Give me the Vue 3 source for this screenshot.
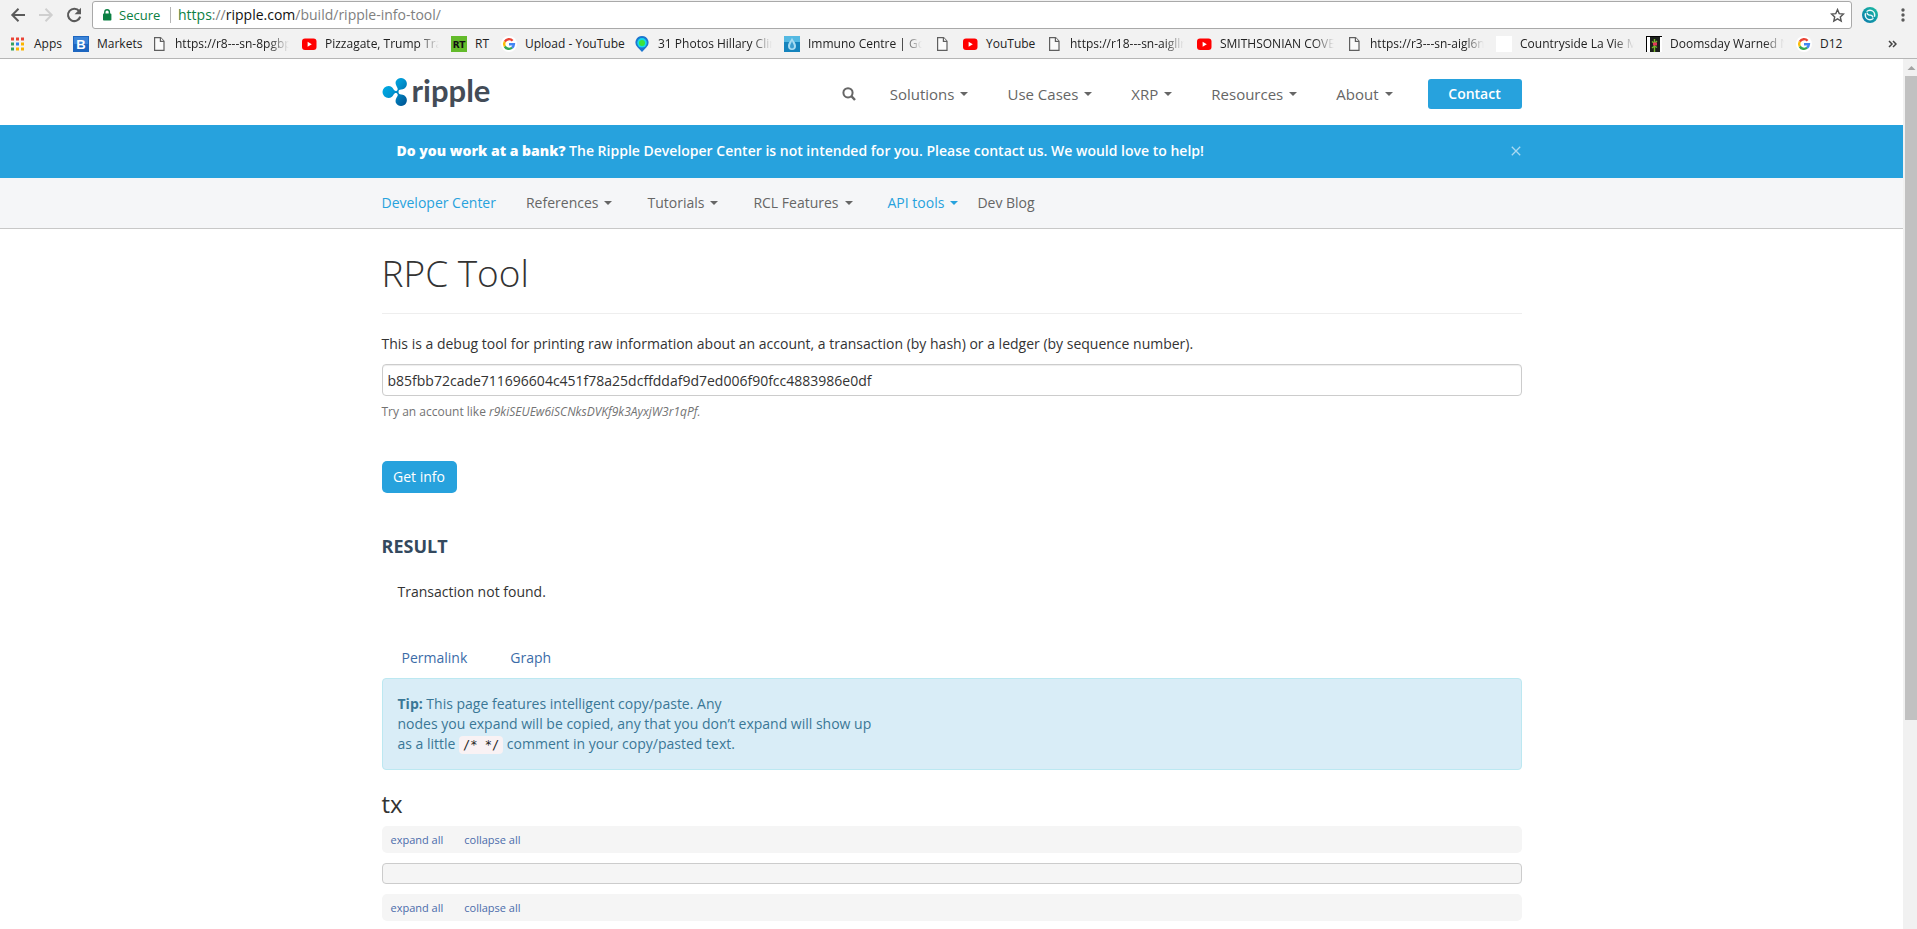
<script setup>
import { ref } from 'vue'

const query = ref('b85fbb72cade711696604c451f78a25dcffddaf9d7ed006f90fcc4883986e0df')
const bannerOpen = ref(true)

const bookmarks = [
  { icon: 'apps', label: 'Apps', width: 27 },
  { icon: 'bold', label: 'Markets', width: 42 },
  { icon: 'page', label: 'https://r8---sn-8pgbp', width: 114 },
  { icon: 'youtube', label: 'Pizzagate, Trump Tra', width: 114 },
  { icon: 'rt', label: 'RT', width: 14 },
  { icon: 'google', label: 'Upload - YouTube', width: 97 },
  { icon: 'pin', label: '31 Photos Hillary Clin', width: 114 },
  { icon: 'drop', label: 'Immuno Centre | GcM', width: 114 },
  { icon: 'page', label: '', width: 0 },
  { icon: 'youtube', label: 'YouTube', width: 48 },
  { icon: 'page', label: 'https://r18---sn-aigllr', width: 114 },
  { icon: 'youtube', label: 'SMITHSONIAN COVE', width: 114 },
  { icon: 'page', label: 'https://r3---sn-aigl6n', width: 114 },
  { icon: 'blank', label: 'Countryside La Vie M', width: 114 },
  { icon: 'flower', label: 'Doomsday Warned N', width: 114 },
  { icon: 'google', label: 'D12', width: 22 },
]

const mainNav = ['Solutions', 'Use Cases', 'XRP', 'Resources', 'About']
const subNav = ['References', 'Tutorials', 'RCL Features', 'API tools']
</script>

<template>
  <div class="browser">
    <div class="chrome">
      <div class="toolbar">
        <button class="tool" aria-label="Back">
          <svg width="16" height="16" viewBox="0 0 16 16" fill="none" stroke="#5a5a5a" stroke-width="2"><path d="M15 8H2.5M8.5 1.8 2.3 8l6.2 6.2" /></svg>
        </button>
        <button class="tool" aria-label="Forward">
          <svg width="16" height="16" viewBox="0 0 16 16" fill="none" stroke="#cfcfcf" stroke-width="2"><path d="M1 8h12.5M7.5 1.8 13.7 8l-6.2 6.2" /></svg>
        </button>
        <button class="tool" aria-label="Reload">
          <svg width="16" height="16" viewBox="0 0 16 16"><path d="M13.2 4.2A6.2 6.2 0 1 0 14.2 9.6" fill="none" stroke="#5a5a5a" stroke-width="2.1" /><path d="M15 .8v6.4H8.6z" fill="#5a5a5a" /></svg>
        </button>
        <div class="omnibox">
          <svg width="10" height="12" viewBox="0 0 10 12"><rect x="1" y="4.6" width="8.4" height="7" rx=".8" fill="#0b8043" /><path d="M2.8 5V3a2.3 2.3 0 0 1 4.6 0v2" fill="none" stroke="#0b8043" stroke-width="1.4" /></svg>
          <span class="secure">Secure</span>
          <span class="divider"></span>
          <div class="url" role="textbox" aria-label="Address" contenteditable="true" spellcheck="false"><span class="scheme">https</span>://<span class="host">ripple.com</span>/build/ripple-info-tool/</div>
          <button class="star" aria-label="Bookmark this page">
            <svg width="15" height="15" viewBox="0 0 15 15"><path d="M7.5 1.6l1.7 4 4.3.4-3.2 2.9.9 4.2-3.7-2.2-3.7 2.2.9-4.2L1.5 6l4.3-.4z" fill="none" stroke="#555" stroke-width="1.4" /></svg>
          </button>
        </div>
        <button class="ext" aria-label="Extension">
          <svg width="16" height="16" viewBox="0 0 16 16"><defs><linearGradient id="ext" x1="0" y1="1" x2="1" y2="0"><stop offset="0" stop-color="#0a78ad" /><stop offset="1" stop-color="#1cbf9f" /></linearGradient></defs><circle cx="8" cy="8" r="8" fill="url(#ext)" /><circle cx="8" cy="8" r="4.700" fill="none" stroke="#eefafa" stroke-width="1.500" /><path d="M2.600 4.200l3.200 2.600c1.500 1.400 3 1 4.400 2.400l3.200 2.600" fill="none" stroke="#0f93a8" stroke-width="1.800" /><path d="M5 5.600c.6 2.400 2 2.600 3 2.500s2.400.1 3 2.400" fill="none" stroke="#eefafa" stroke-width="1.400" /></svg>
        </button>
        <button class="ext more" aria-label="Menu">
          <svg width="4" height="14" viewBox="0 0 4 14" fill="#5a5a5a"><circle cx="2" cy="2" r="1.700" /><circle cx="2" cy="7" r="1.700" /><circle cx="2" cy="12" r="1.700" /></svg>
        </button>
      </div>
      <nav class="bookmarks" aria-label="Bookmarks">
        <a v-for="(b, i) in bookmarks" :key="i" href="#" class="bookmark" :aria-label="b.label || 'Untitled'">
          <svg width="16" height="16" viewBox="0 0 16 16">
            <g v-if="b.icon === 'apps'">
              <path d="M1 1.500h3v3H1zM6 1.500h3v3H6zM11 1.500h3v3h-3z" fill="#ea4335" />
              <path d="M1 6.500h3v3H1zM1 11.500h3v3H1z" fill="#34a060" />
              <path d="M6 6.500h3v3H6z" fill="#2f80ed" />
              <path d="M11 6.500h3v3h-3zM6 11.500h3v3H6zM11 11.500h3v3h-3z" fill="#fbb400" />
            </g>
            <g v-else-if="b.icon === 'bold'">
              <rect width="16" height="16" fill="#1d66c0" />
              <rect x="1" y="1" width="14" height="7" fill="#3b84d8" />
              <text x="8" y="13" text-anchor="middle" class="mark-b">B</text>
            </g>
            <g v-else-if="b.icon === 'page'" fill="#fbfbfb" stroke="#5f5f5f" stroke-width="1.200">
              <path d="M3.600 1.600h6l3.400 3.600v9.200H3.600z" /><path d="M9.400 1.600v3.800H13" />
            </g>
            <g v-else-if="b.icon === 'youtube'">
              <rect x="1" y="2.500" width="14.500" height="11.500" rx="3" fill="#f00" /><path d="M6.600 5.800v5L10.800 8.300z" fill="#fff" />
            </g>
            <g v-else-if="b.icon === 'rt'">
              <rect width="16" height="16" fill="#63bb2b" /><text x="8" y="12" text-anchor="middle" class="mark-rt">RT</text>
            </g>
            <g v-else-if="b.icon === 'google'" fill="none" stroke-width="2.400">
              <circle cx="8" cy="8" r="8" fill="#fff" />
              <path d="M3.800 5.600A4.900 4.900 0 0 1 11.600 4.700" stroke="#ea4335" />
              <path d="M3.800 5.600a4.900 4.900 0 0 0 0 4.900" stroke="#fbbc05" />
              <path d="M3.800 10.500a4.900 4.900 0 0 0 7.300 1.200" stroke="#34a853" />
              <path d="M11.100 11.700A4.900 4.900 0 0 0 12.900 8.200H8" stroke="#4285f4" />
            </g>
            <g v-else-if="b.icon === 'pin'">
              <path d="M8 0a6.500 6.500 0 0 1 4.500 11.200L8 16l-4.500-4.800A6.500 6.500 0 0 1 8 0z" fill="#1b75d0" />
              <circle cx="8" cy="6.800" r="4.800" fill="#16d9e8" /><circle cx="8" cy="7" r="3" fill="#3be23a" />
            </g>
            <g v-else-if="b.icon === 'drop'">
              <rect width="16" height="16" fill="#1584bd" /><rect width="16" height="6" fill="#54b9e2" />
              <path d="M8 1.500c1 3.200 4 5 4 8.500a4 4 0 0 1-8 0c0-3.500 3-5.300 4-8.500z" fill="#a9dcf2" /><path d="M8 5c.5 2 2 3.500 2 5.500a2 2 0 0 1-4 0C6 8.500 7.500 7 8 5z" fill="#3d9fd0" />
            </g>
            <rect v-else-if="b.icon === 'blank'" width="16" height="16" fill="#fff" />
            <g v-else>
              <rect width="16" height="16" fill="#fff" /><path d="M0 0h16v1H1v15H0z" fill="#000" /><rect x="4" y="1" width="10" height="15" fill="#1c1f1c" />
              <path d="M8.500 3v13M6 5.500l2.500 2L11 5M6 12l2.500-2 2.500 1.500" fill="none" stroke="#76b82a" stroke-width="1.400" /><path d="M7 6.500h4v3H7z" fill="#e2355a" />
            </g>
          </svg>
          <span v-if="b.label" class="bookmark-label" :class="{ fade: b.width === 114 }" :style="{ width: b.width + 'px' }">{{ b.label }}</span>
        </a>
        <button class="overflow" aria-label="More bookmarks">
          <svg width="9" height="8" viewBox="0 0 9 8" fill="none" stroke="#444" stroke-width="1.500"><path d="M1 1l3 3-3 3M5 1l3 3-3 3" /></svg>
        </button>
      </nav>
    </div>

    <div class="viewport">
      <div class="page">
        <header class="site-header">
          <div class="container header-row">
            <a href="#" class="logo" aria-label="Ripple">
              <svg width="26" height="28" viewBox="0 0 26 28">
                <defs><linearGradient id="mark" x1="0" y1="0" x2="1" y2="1"><stop offset="0" stop-color="#00b5ec" /><stop offset=".45" stop-color="#0097d3" /><stop offset="1" stop-color="#00508f" /></linearGradient></defs>
                <path fill="url(#mark)" d="M6.500 8c2.600 0 4.100 1.600 5 3.300 1 1.700 2.200 1.900 3.300 1.400 1-.6 1.300-1.800.4-3.300C13.500 6.500 13.200 4.600 14 3a5.800 5.800 0 1 1 5.200 8.600c-1.900 0-2.700.8-2.700 2.400s.8 2.400 2.700 2.400A5.800 5.800 0 1 1 14 25c-.8-1.600-.5-3.500 1.200-6.400.9-1.500.6-2.700-.4-3.300-1.100-.5-2.300-.3-3.300 1.400-.9 1.700-2.400 3.300-5 3.300a6 6 0 1 1 0-12z" />
              </svg>
              <span class="wordmark">ripple</span>
            </a>
            <nav class="main-nav" aria-label="Main">
              <button class="search" aria-label="Search">
                <svg width="14" height="14" viewBox="0 0 14 14" fill="none" stroke="#666"><circle cx="6" cy="5.800" r="4.600" stroke-width="2" /><path d="M9.400 9.200l3.600 3.800" stroke-width="2.400" /></svg>
              </button>
              <button v-for="item in mainNav" :key="item" class="drop">{{ item }}<i class="caret"></i></button>
            </nav>
            <a href="#" class="contact">Contact</a>
          </div>
        </header>

        <div v-if="bannerOpen" class="banner">
          <div class="container banner-row">
            <p><b>Do you work at a bank?</b> The Ripple Developer Center is not intended for you. Please contact us. We would love to help!</p>
            <button class="close" aria-label="Close" @click="bannerOpen = false">
              <svg width="10" height="10" viewBox="0 0 10 10" fill="none" stroke="#a9d9f1" stroke-width="1.300"><path d="M.8.8l8.400 8.400M9.200.8.8 9.200" /></svg>
            </button>
          </div>
        </div>

        <nav class="sub-nav" aria-label="Developer Center">
          <div class="container sub-row">
            <a href="#" class="active home">Developer Center</a>
            <button v-for="item in subNav" :key="item" class="drop" :class="{ active: item === 'API tools' }">{{ item }}<i class="caret"></i></button>
            <a href="#" class="blog">Dev Blog</a>
          </div>
        </nav>

        <main class="container">
          <h1>RPC Tool</h1>
          <form @submit.prevent>
            <label for="target">This is a debug tool for printing raw information about an account, a transaction (by hash) or a ledger (by sequence number).</label>
            <input id="target" v-model="query" type="text" spellcheck="false" />
            <p class="help">Try an account like <em>r9kiSEUEw6iSCNksDVKf9k3AyxjW3r1qPf.</em></p>
            <button class="submit" type="submit">Get info</button>
          </form>

          <h2>RESULT</h2>
          <p class="status">Transaction not found.</p>

          <div class="links">
            <a href="#">Permalink</a>
            <a href="#">Graph</a>
          </div>
          <div class="tip">
            <b>Tip:</b> This page features intelligent copy/paste. Any<br />
            nodes you expand will be copied, any that you don’t expand will show up<br />
            as a little <code>/* */</code> comment in your copy/pasted text.
          </div>

          <h3>tx</h3>
          <div class="strip"><a href="#">expand all</a><a href="#">collapse all</a></div>
          <div class="json"></div>
          <div class="strip"><a href="#">expand all</a><a href="#">collapse all</a></div>
        </main>
      </div>
      <div class="scrollbar" aria-hidden="true">
        <svg width="14" height="17" viewBox="0 0 14 17"><path d="M4.500 11L8.500 7l4 4z" fill="#a3a3a3" /></svg>
        <div class="thumb"></div>
      </div>
    </div>
  </div>
</template>

<style>
body {
  margin: 0;
  overflow: hidden;
}
</style>

<style scoped>
.browser {
  display: flex;
  flex-direction: column;
  height: 100vh;
  font: 14px/20px "Open Sans", sans-serif;
  color: #333;
  background: #fff;
}
.browser * {
  box-sizing: border-box;
}
svg {
  display: block;
  flex: none;
}
button {
  padding: 0;
  border: 0;
  background: none;
  font: inherit;
  color: inherit;
  cursor: pointer;
}
a {
  text-decoration: none;
  color: inherit;
}
p {
  margin: 0;
}

/* Browser chrome */
.chrome {
  flex: none;
  background: #f2f2f2;
  border-bottom: 1px solid #b6b6b6;
}
.toolbar {
  display: flex;
  align-items: center;
  padding: 1px 12px 0 10px;
}
.tool {
  margin-right: 12px;
}
.tool:nth-child(3) {
  margin-right: 10px;
}
.omnibox {
  flex: 1;
  display: flex;
  align-items: center;
  height: 28px;
  padding: 0 6px 0 9px;
  border: 1px solid #a9a9a9;
  border-radius: 3px;
  background: #fff;
}
.secure {
  margin-left: 7px;
  width: 42px;
  white-space: nowrap;
  font-size: 13px;
  color: #0b8043;
}
.divider {
  width: 1px;
  height: 16px;
  margin: 0 7px 0 9px;
  background: #b5b5b5;
}
.url {
  flex: 1;
  outline: none;
  color: #808080;
}
.scheme {
  color: #0b8043;
}
.host {
  color: #111;
}
.ext {
  margin-left: 10px;
}
.more {
  margin-left: 23px;
}
.bookmarks {
  display: flex;
  align-items: center;
  gap: 12px;
  height: 29px;
  padding: 0 20px 0 10px;
  font-size: 12px;
  color: #222;
}
.bookmark {
  display: flex;
  align-items: center;
  gap: 8px;
}
.bookmark-label {
  white-space: nowrap;
  line-height: 16px;
}
.fade {
  overflow: hidden;
  mask-image: linear-gradient(to right, #000 calc(100% - 20px), transparent);
}
.overflow {
  margin-left: auto;
}
.mark-b {
  font: bold 13px "Liberation Sans", sans-serif;
  fill: #fff;
}
.mark-rt {
  font: bold 9px "DejaVu Sans", sans-serif;
  fill: #111;
}

/* Page */
.viewport {
  flex: 1;
  min-height: 0;
  display: flex;
}
.page {
  flex: 1;
  min-width: 0;
  overflow: hidden;
}
.container {
  max-width: 1140px;
  margin: 0 auto;
}
.site-header {
  color: #666;
}
.header-row {
  display: flex;
  align-items: center;
  height: 66px;
  padding-top: 4px;
}
.logo {
  display: flex;
  align-items: center;
  margin-right: auto;
  padding-bottom: 4px;
  gap: 4px;
}
.wordmark {
  padding-bottom: 4px;
  font: bold 31px/32px Lato, sans-serif;
  color: #434c57;
}
.main-nav {
  display: flex;
  align-items: center;
  gap: 39px;
  margin-right: 35px;
  font-size: 15px;
}
.search {
  margin-right: -5px;
}
.drop {
  display: flex;
  align-items: center;
  gap: 6px;
  white-space: nowrap;
}
.caret {
  border: 4px solid transparent;
  border-top-color: currentColor;
  border-bottom: 0;
}
.contact {
  width: 94px;
  border-radius: 3px;
  background: #27a2dd;
  color: #fff;
  font-weight: 600;
  line-height: 30px;
  text-align: center;
}
.banner {
  background: #27a2dd;
  color: #fff;
  font-weight: 600;
}
.banner-row {
  display: flex;
  align-items: center;
  justify-content: space-between;
  height: 53px;
  padding: 0 1px 2px 15px;
}
.sub-nav {
  background: #f5f6f8;
  border-bottom: 1px solid #c8c8c8;
  color: #666;
}
.sub-row {
  display: flex;
  align-items: center;
  gap: 35px;
  height: 50px;
}
.active {
  color: #27a2dd;
}
.home {
  margin-right: -5px;
}
.blog {
  margin-left: -16px;
}
h1 {
  margin: 0 0 20px;
  padding: 22px 0 18px;
  border-bottom: 1px solid #eee;
  font-size: 37px;
  font-weight: 300;
  line-height: 44px;
}
label {
  display: block;
  margin-bottom: 10px;
}
input {
  display: block;
  width: 100%;
  height: 32px;
  padding: 0 5px;
  border: 1px solid #ccc;
  border-radius: 4px;
  box-shadow: inset 0 1px 1px rgba(0, 0, 0, 0.075);
  background: #fff;
  font: inherit;
  color: #333;
}
.help {
  margin: 6px 0 39px;
  font-size: 12px;
  color: #737373;
}
.submit {
  width: 75px;
  height: 32px;
  border-radius: 5px;
  background: #27a2dd;
  color: #fff;
}
h2 {
  margin: 41px 0 24px;
  font-size: 18px;
  font-weight: 700;
  line-height: 24px;
  color: #34495e;
}
.status {
  padding-left: 16px;
}
.links {
  display: flex;
  gap: 43px;
  padding: 46px 0 10px 20px;
  color: #3b6ca8;
}
.tip {
  padding: 15px;
  border: 1px solid #bce8f1;
  border-radius: 4px;
  background: #d9edf7;
  color: #3a7796;
}
code {
  padding: 2px 4px;
  border-radius: 4px;
  background: #f9f2f4;
  color: #222;
  font: 12px "DejaVu Sans Mono", monospace;
}
h3 {
  margin: 20px 0 8px;
  font-size: 24px;
  font-weight: 400;
  line-height: 28px;
}
.strip {
  display: flex;
  gap: 21px;
  padding: 0 9px;
  border-radius: 5px;
  background: #f5f5f5;
  color: #4b6cab;
  font-size: 11px;
  line-height: 27px;
}
.json {
  height: 21px;
  margin: 10px 0;
  border: 1px solid #ccc;
  border-radius: 4px;
  background: #f5f5f5;
}
.scrollbar {
  flex: none;
  display: flex;
  flex-direction: column;
  width: 14px;
  background: #f1f1f1;
}
.thumb {
  height: 74%;
  margin-left: 2px;
  background: #c1c1c1;
}
</style>
